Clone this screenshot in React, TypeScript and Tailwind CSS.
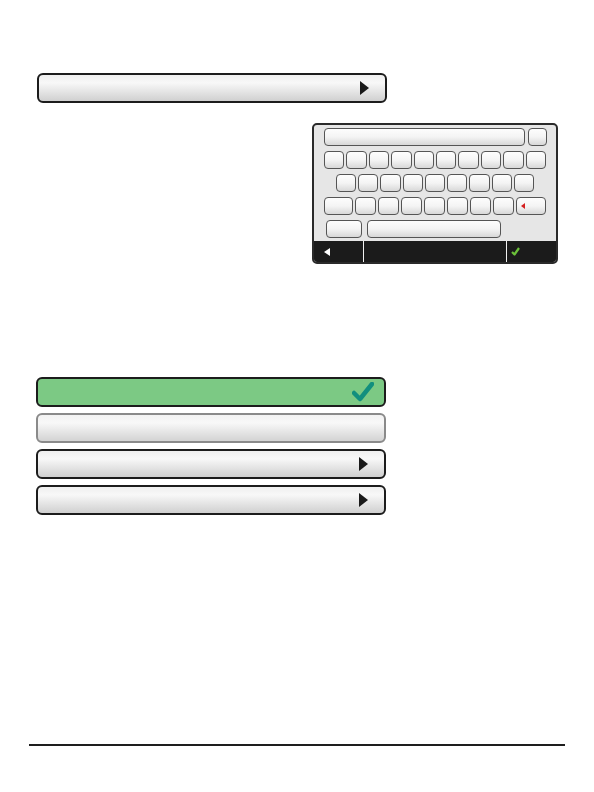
import type { ReactNode } from 'react'

/* Glossy menu button used in the manual illustrations. */
function MenuButton({ variant = 'default', children }: { variant?: 'default' | 'selected' | 'disabled'; children?: ReactNode }) {
  const tone =
    variant === 'selected'
      ? 'bg-[#7cc984] border-[#1c1c1c]'
      : variant === 'disabled'
        ? 'bg-linear-to-b from-[#f2f2f2] via-[#f8f8f8] via-30% to-[#d3d3d3] border-[#8a8a8a]'
        : 'bg-linear-to-b from-[#efefef] via-[#f8f8f8] via-30% to-[#d0d0d0] border-[#1c1c1c]'
  return (
    <div className={`flex items-center justify-end w-[350px] h-[30px] pr-[16px] border-2 rounded-[6px] ${tone}`}>
      {children}
    </div>
  )
}

function Arrow() {
  return (
    <svg width="9" height="14" viewBox="0 0 9 14">
      <polygon points="0,0 9,7 0,14" fill="#1a1a1a" />
    </svg>
  )
}

function Key({ w, children }: { w?: string; children?: ReactNode }) {
  return (
    <div
      className={`flex items-center pl-[4px] h-full rounded-[4px] border border-[#555] bg-linear-to-b from-[#fdfdfd] via-[#f4f4f4] to-[#d8d8d8] ${w ?? 'flex-1'}`}
    >
      {children}
    </div>
  )
}

function Keyboard() {
  return (
    <div className="flex flex-col w-[246px] h-[141px] ml-[283px] mt-[20px] border-2 border-[#2a2a2a] rounded-[5px] bg-[#e6e6e6] overflow-hidden">
      <div className="flex flex-col gap-[5px] pt-[3px] pl-[10px]">
        <div className="flex gap-[3px] h-[18px] w-[223px]">
          <Key w="w-[201px]" />
          <Key w="w-[19px]" />
        </div>
        <div className="flex gap-[2px] h-[18px] w-[222px]">
          {Array.from({ length: 10 }).map((_, i) => (
            <Key key={i} />
          ))}
        </div>
        <div className="flex gap-[2px] h-[18px] w-[198px] ml-[12px]">
          {Array.from({ length: 9 }).map((_, i) => (
            <Key key={i} />
          ))}
        </div>
        <div className="flex gap-[2px] h-[18px] w-[222px]">
          <Key w="w-[29px]" />
          {Array.from({ length: 7 }).map((_, i) => (
            <Key key={i} />
          ))}
          <Key w="w-[30px]">
            <svg width="4" height="6" viewBox="0 0 4 6">
              <polygon points="4,0 0,3 4,6" fill="#d42020" />
            </svg>
          </Key>
        </div>
        <div className="flex gap-[5px] h-[18px] ml-[2px]">
          <Key w="w-[36px]" />
          <Key w="w-[134px]" />
        </div>
      </div>
      <div className="flex mt-auto h-[21px] bg-[#1b1b1b]">
        <div className="flex items-center w-[50px] pl-[10px] border-r border-[#f0f0f0]">
          <svg width="6" height="8" viewBox="0 0 6 8">
            <polygon points="6,0 0,4 6,8" fill="#ffffff" />
          </svg>
        </div>
        <div className="w-[143px] border-r border-[#f0f0f0]" />
        <div className="flex items-center pl-[4px]">
          <svg width="9" height="9" viewBox="0 0 9 9">
            <path d="M1 5 L3.5 7.5 L8 1" fill="none" stroke="#6cc13a" strokeWidth="2.2" strokeLinejoin="round" />
          </svg>
        </div>
      </div>
    </div>
  )
}

export default function App() {
  return (
    <div className="w-[594px] h-[792px] bg-white px-[29px] pt-[73px] flex flex-col">
      <div className="ml-[8px]">
        <MenuButton>
          <Arrow />
        </MenuButton>
      </div>
      <Keyboard />
      <div className="flex flex-col gap-[6px] ml-[7px] mt-[113px]">
        <MenuButton variant="selected">
          <svg width="22" height="20" viewBox="0 0 22 20" className="mr-[-6px]">
            <path d="M2 11 L8 17 L20 2" fill="none" stroke="#128f7e" strokeWidth="4.5" strokeLinecap="round" strokeLinejoin="round" />
          </svg>
        </MenuButton>
        <MenuButton variant="disabled" />
        <MenuButton>
          <Arrow />
        </MenuButton>
        <MenuButton>
          <Arrow />
        </MenuButton>
      </div>
      <div className="mt-[229px] h-[1.5px] w-[536px] bg-[#1e1e1e]" />
    </div>
  )
}
